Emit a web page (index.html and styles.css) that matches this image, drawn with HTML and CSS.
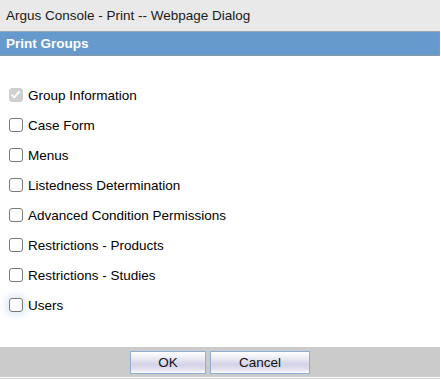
FILE: index.html
```html
<!DOCTYPE html>
<html>
<head>
<meta charset="utf-8">
<link rel="stylesheet" href="styles.css">
</head>
<body>
<div class="dialog">
  <div class="titlebar">Argus Console - Print -- Webpage Dialog</div>
  <div class="header">Print Groups</div>
  <div class="list">
    <label class="row"><span class="box checked"><svg width="13" height="13" viewBox="0 0 13 13"><path d="M2.5 6.8 L5.2 9.4 L10.5 3.4" fill="none" stroke="#ffffff" stroke-width="2"/></svg></span><span>Group Information</span></label>
    <label class="row"><span class="box"></span><span>Case Form</span></label>
    <label class="row"><span class="box"></span><span>Menus</span></label>
    <label class="row"><span class="box"></span><span>Listedness Determination</span></label>
    <label class="row"><span class="box"></span><span>Advanced Condition Permissions</span></label>
    <label class="row"><span class="box"></span><span>Restrictions - Products</span></label>
    <label class="row"><span class="box"></span><span>Restrictions - Studies</span></label>
    <label class="row"><span class="box focus"></span><span>Users</span></label>
  </div>
  <div class="footer">
    <button class="btn ok">OK</button>
    <button class="btn cancel">Cancel</button>
  </div>
</div>
</body>
</html>
```
FILE: styles.css
```css
html, body {
  margin: 0;
  padding: 0;
  background: #ffffff;
}
body {
  font-family: "Liberation Sans", Arial, sans-serif;
  font-size: 13.5px;
  color: #000;
}
.dialog {
  width: 440px;
  height: 379px;
  display: flex;
  flex-direction: column;
}
.titlebar {
  height: 31px;
  line-height: 31px;
  background: #e9e9e9;
  padding-left: 6px;
  color: #1a1a1a;
}
.header {
  height: 23px;
  line-height: 23px;
  background: #6699cc;
  border-top: 1px solid #9aa6b2;
  border-bottom: 1px solid #8b96a2;
  border-right: 1px solid #8b96a2;
  color: #fff;
  font-weight: bold;
  padding-left: 6px;
}
.list {
  padding-top: 24px;
  display: flex;
  flex-direction: column;
  flex: 1;
}
.row {
  height: 30px;
  display: flex;
  align-items: center;
}
.box {
  box-sizing: border-box;
  width: 14px;
  height: 14px;
  margin: 0 5px 0 9px;
  border: 1px solid #7a7a7a;
  border-radius: 3px;
  background: #fff;
  display: flex;
}
.box.checked {
  border-color: #cfcfcf;
  background: #cfcfcf;
}
.box.checked svg {
  margin: -1px;
}
.box.focus {
  box-shadow: 0 0 7px 4px rgba(120, 160, 220, 0.2);
}
.footer {
  height: 30px;
  background: #cbcbcb;
  margin-bottom: 2px;
  box-shadow: 0 1px 0 #ffffff, 0 2px 0 #cfcfcf;
  display: flex;
  align-items: center;
  justify-content: center;
  gap: 4px;
}
.btn {
  height: 23px;
  border: 1px solid #8fb0d6;
  background: linear-gradient(#ffffff 0%, #f2f2f8 20%, #d4d2e6 60%, #e6e4f0 85%, #ffffff 100%);
  font-family: "Liberation Sans", Arial, sans-serif;
  font-size: 13.5px;
  color: #111;
  padding: 0;
  margin: 0;
}
.ok { width: 76px; }
.cancel { width: 100px; }
```
